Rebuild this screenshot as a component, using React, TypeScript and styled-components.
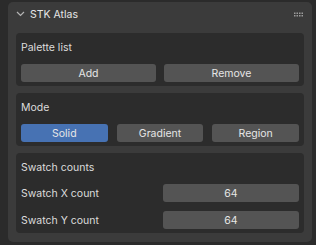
import React from "react";
import styled, { createGlobalStyle } from "styled-components";

const Global = createGlobalStyle`
  html, body { margin: 0; padding: 0; background: #2b2b2b; }
  body { width: 316px; height: 245px; overflow: hidden; font-family: Inter, "DejaVu Sans", sans-serif; }
  #root { width: 316px; height: 245px; }
`;

const Region = styled.div`
  box-sizing: border-box;
  width: 316px;
  height: 245px;
  padding: 2px 4px 3px 8px;
  background: #2b2b2b;
`;

const Panel = styled.div`
  box-sizing: border-box;
  height: 240px;
  background: #3b3b3b;
  border-radius: 5px;
  padding: 0 8px 9px 8px;
  display: flex;
  flex-direction: column;
  gap: 7px;
`;

const Header = styled.div`
  height: 24px;
  display: flex;
  align-items: center;
  gap: 5px;
  color: #e6e6e6;
  font-size: 10.5px;
`;

const Title = styled.span`
  flex: 1;
`;

const SubPanel = styled.div`
  box-sizing: border-box;
  background: #2c2c2c;
  border-radius: 4px;
  padding: 0 5px 4px 5px;
  display: flex;
  flex-direction: column;
`;

const SubTitle = styled.div`
  height: 31px;
  display: flex;
  align-items: center;
  padding-bottom: 3px;
  box-sizing: border-box;
  color: #dcdcdc;
  font-size: 10.5px;
`;

const Row = styled.div<{ $gap?: number }>`
  display: flex;
  gap: ${(p) => p.$gap ?? 8}px;
`;

const Rows = styled.div`
  display: flex;
  flex-direction: column;
  gap: 9px;
`;

const Button = styled.div<{ $active?: boolean }>`
  flex: 1;
  height: 18px;
  border-radius: 3px;
  background: ${(p) => (p.$active ? "#4772b3" : "#545454")};
  color: #e6e6e6;
  font-size: 10.5px;
  display: flex;
  align-items: center;
  justify-content: center;
`;

const FieldRow = styled.div`
  display: flex;
  align-items: center;
  height: 18px;
`;

const FieldLabel = styled.div`
  flex: 0 0 142px;
  color: #dcdcdc;
  font-size: 10.5px;
`;

const NumberField = styled.div`
  flex: 1;
  height: 18px;
  border-radius: 3px;
  background: #545454;
  color: #e6e6e6;
  font-size: 10.5px;
  display: flex;
  align-items: center;
  justify-content: center;
`;

const Chevron = () => (
  <svg width="9" height="6" viewBox="0 0 9 6">
    <path d="M1 1 L4.5 4.5 L8 1" stroke="#b4b4b4" strokeWidth="1.2" fill="none" />
  </svg>
);

const Grip = () => (
  <svg width="10" height="5" viewBox="0 0 10 5">
    {[0, 1, 2, 3].map((i) =>
      [0, 1].map((j) => (
        <g key={`${i}-${j}`}>
          <rect x={i * 2.5} y={j * 2.5 + 0.5} width="1.5" height="1.5" fill="#9c9c9c" />
        </g>
      ))
    )}
  </svg>
);

export default function App() {
  return (
    <>
      <Global />
      <Region>
        <Panel>
          <Header>
            <Chevron />
            <Title>STK Atlas</Title>
            <Grip />
          </Header>
          <SubPanel>
            <SubTitle>Palette list</SubTitle>
            <Row>
              <Button>Add</Button>
              <Button>Remove</Button>
            </Row>
          </SubPanel>
          <SubPanel>
            <SubTitle>Mode</SubTitle>
            <Row $gap={9}>
              <Button $active>Solid</Button>
              <Button>Gradient</Button>
              <Button>Region</Button>
            </Row>
          </SubPanel>
          <SubPanel>
            <SubTitle>Swatch counts</SubTitle>
            <Rows>
              <FieldRow>
                <FieldLabel>Swatch X count</FieldLabel>
                <NumberField>64</NumberField>
              </FieldRow>
              <FieldRow>
                <FieldLabel>Swatch Y count</FieldLabel>
                <NumberField>64</NumberField>
              </FieldRow>
            </Rows>
          </SubPanel>
        </Panel>
      </Region>
    </>
  );
}
